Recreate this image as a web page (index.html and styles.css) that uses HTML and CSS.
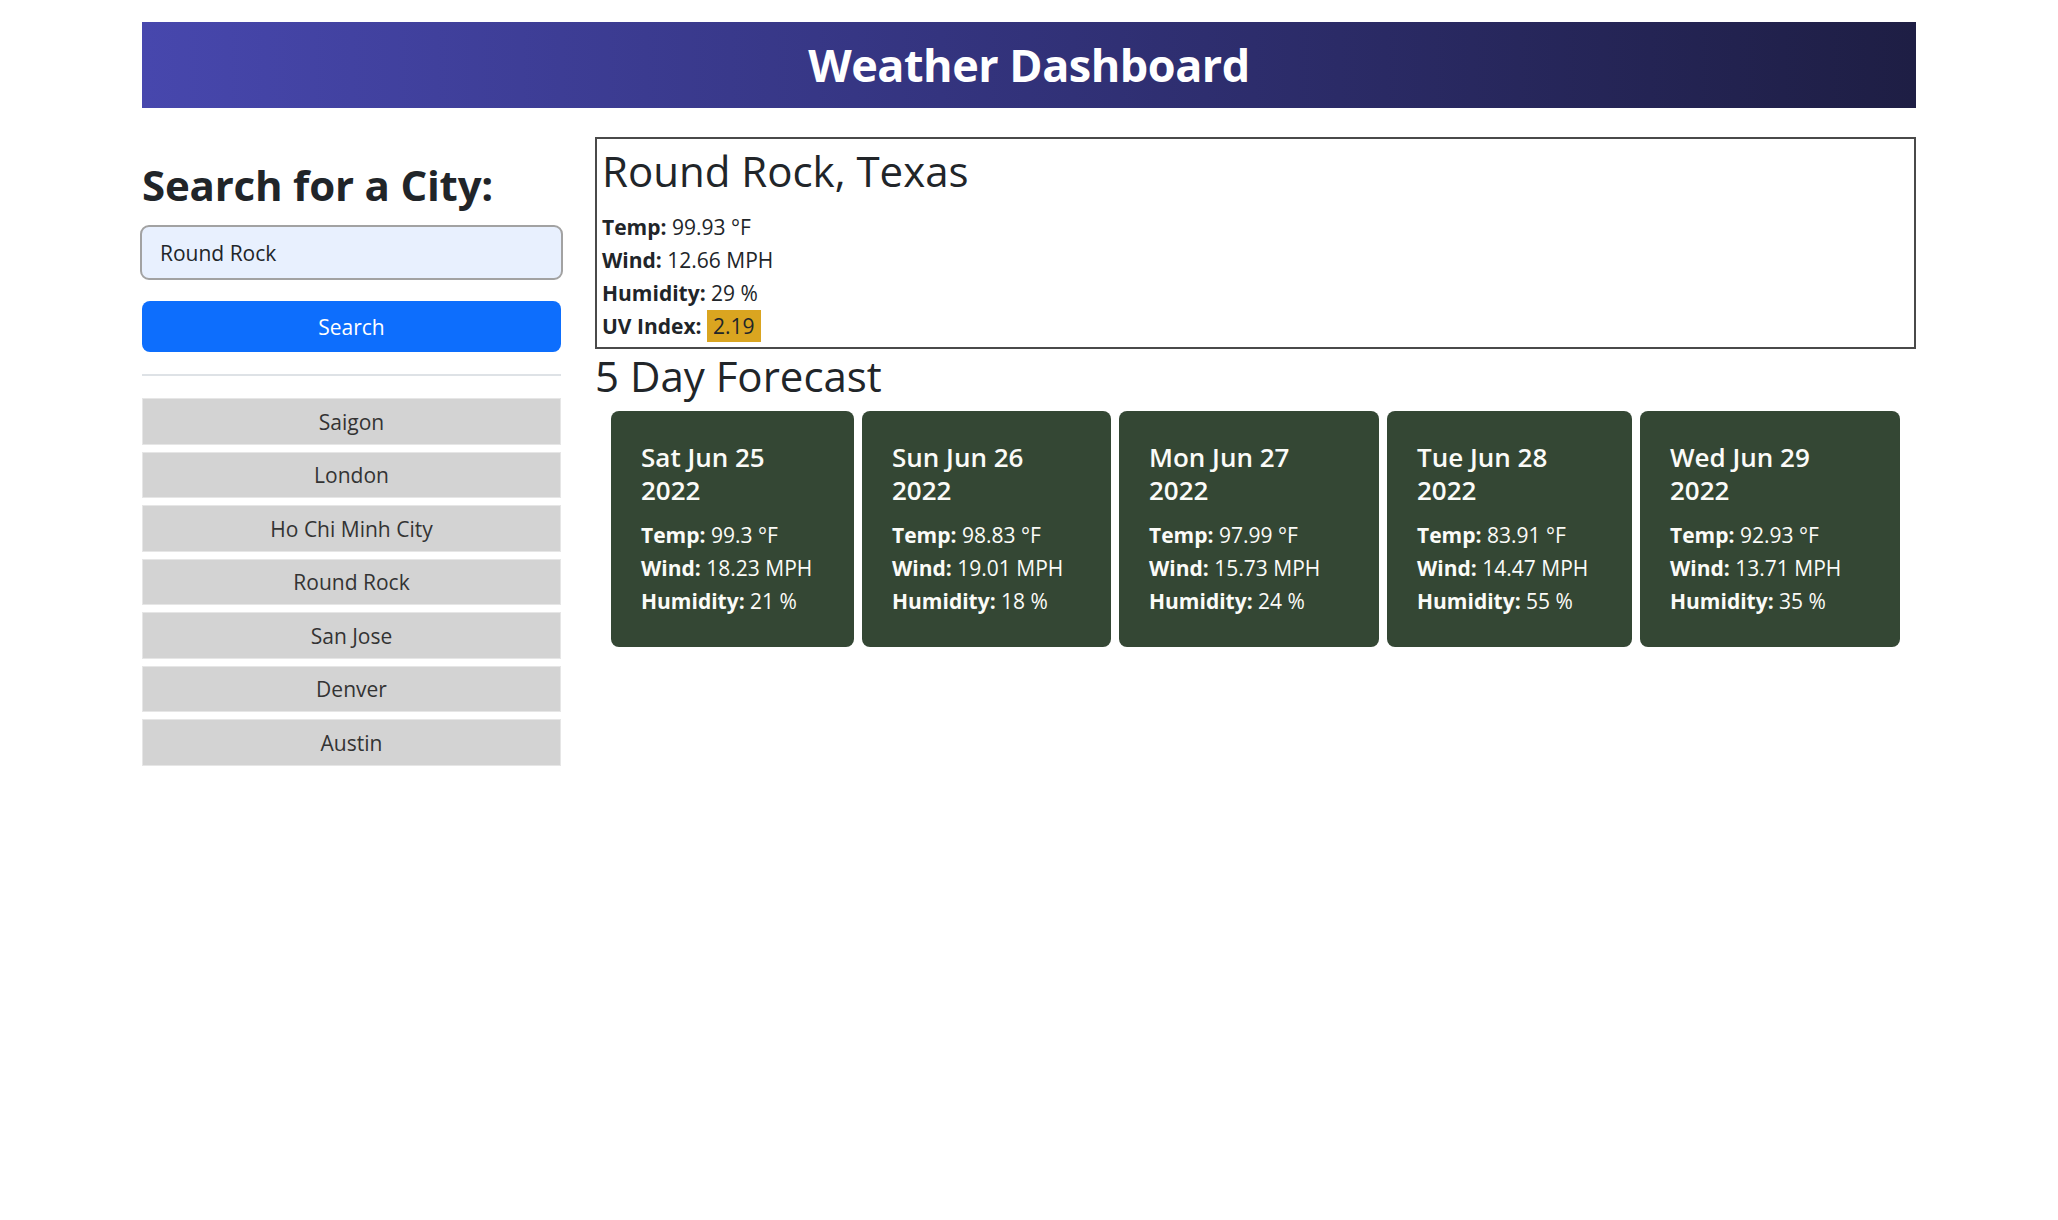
FILE: index.html
```html
<!DOCTYPE html>
<html lang="en">
<head>
<meta charset="utf-8">
<title>Weather Dashboard</title>
<link rel="stylesheet" href="styles.css">
</head>
<body>
<div class="page">
  <header class="banner">
    <h1 class="banner-title">Weather Dashboard</h1>
  </header>
  <main class="main">
    <aside class="sidebar">
      <h2 class="search-title">Search for a City:</h2>
      <input class="search-input" type="text" value="Round Rock">
      <button class="search-btn">Search</button>
      <hr class="divider">
      <div class="history">
        <button class="city-btn">Saigon</button>
        <button class="city-btn">London</button>
        <button class="city-btn">Ho Chi Minh City</button>
        <button class="city-btn">Round Rock</button>
        <button class="city-btn">San Jose</button>
        <button class="city-btn">Denver</button>
        <button class="city-btn">Austin</button>
      </div>
    </aside>
    <section class="content">
      <div class="current">
        <h2 class="current-title">Round Rock, Texas</h2>
        <p class="stat"><b>Temp:</b> 99.93 °F</p>
        <p class="stat"><b>Wind:</b> 12.66 MPH</p>
        <p class="stat"><b>Humidity:</b> 29 %</p>
        <p class="stat"><b>UV Index:</b> <span class="uv">2.19</span></p>
      </div>
      <h2 class="forecast-title">5 Day Forecast</h2>
      <div class="cards">
        <div class="card">
          <h5 class="card-date">Sat Jun 25<br>2022</h5>
          <p class="stat"><b>Temp:</b> 99.3 °F</p>
          <p class="stat"><b>Wind:</b> 18.23 MPH</p>
          <p class="stat"><b>Humidity:</b> 21 %</p>
        </div>
        <div class="card">
          <h5 class="card-date">Sun Jun 26<br>2022</h5>
          <p class="stat"><b>Temp:</b> 98.83 °F</p>
          <p class="stat"><b>Wind:</b> 19.01 MPH</p>
          <p class="stat"><b>Humidity:</b> 18 %</p>
        </div>
        <div class="card">
          <h5 class="card-date">Mon Jun 27<br>2022</h5>
          <p class="stat"><b>Temp:</b> 97.99 °F</p>
          <p class="stat"><b>Wind:</b> 15.73 MPH</p>
          <p class="stat"><b>Humidity:</b> 24 %</p>
        </div>
        <div class="card">
          <h5 class="card-date">Tue Jun 28<br>2022</h5>
          <p class="stat"><b>Temp:</b> 83.91 °F</p>
          <p class="stat"><b>Wind:</b> 14.47 MPH</p>
          <p class="stat"><b>Humidity:</b> 55 %</p>
        </div>
        <div class="card">
          <h5 class="card-date">Wed Jun 29<br>2022</h5>
          <p class="stat"><b>Temp:</b> 92.93 °F</p>
          <p class="stat"><b>Wind:</b> 13.71 MPH</p>
          <p class="stat"><b>Humidity:</b> 35 %</p>
        </div>
      </div>
    </section>
  </main>
</div>
</body>
</html>
```

FILE: styles.css
```css
* { box-sizing: border-box; }

body {
  margin: 0;
  background: #fff;
  color: #212529;
  font-family: "Open Sans", "Noto Sans", sans-serif;
  font-size: 21px;
  line-height: 33px;
}

.page {
  width: 1774px;
  margin: 0 auto;
  padding-top: 22px;
}

.banner {
  height: 86px;
  background: linear-gradient(90deg, #4747ad 0%, #34347f 45%, #1e1e44 100%);
  display: flex;
  align-items: center;
  justify-content: center;
}

.banner-title {
  margin: 0;
  color: #fff;
  font-size: 45px;
  font-weight: 700;
  line-height: 1.2;
  letter-spacing: -0.5px;
}

.main {
  display: flex;
  gap: 34px;
  margin-top: 29px;
}

.sidebar {
  width: 419px;
  flex: none;
  padding-top: 23px;
}

.search-title {
  margin: 0 0 15px;
  font-size: 42px;
  font-weight: 700;
  line-height: 1.2;
  letter-spacing: -0.2px;
}

.search-input {
  display: block;
  width: 423px;
  height: 55px;
  margin-left: -2px;
  padding: 0 18px;
  border: 2px solid #a2a2a2;
  border-radius: 9px;
  background: #e8f0fe;
  color: #212529;
  font-family: inherit;
  font-size: 21px;
}

.search-btn {
  display: block;
  width: 100%;
  height: 51px;
  margin-top: 21px;
  border: none;
  border-radius: 8px;
  background: #0d6efd;
  color: #fff;
  font-family: inherit;
  font-size: 21px;
}

.divider {
  margin: 22px 0 22px;
  border: 0;
  border-top: 2px solid #dee2e6;
}

.history {
  display: flex;
  flex-direction: column;
  gap: 7px;
}

.city-btn {
  height: 46.5px;
  border: 1px solid #e6e6e6;
  background: #d3d3d3;
  color: #333;
  font-family: inherit;
  font-size: 21px;
}

.content {
  flex: 1;
  min-width: 0;
}

.current {
  height: 212px;
  border: 2px solid #4a4a4a;
  padding: 6px 5px 0;
}

.current-title {
  margin: 0 0 13px;
  font-size: 42px;
  font-weight: 400;
  line-height: 1.25;
}

.stat {
  margin: 0;
}

.uv {
  display: inline-block;
  padding: 0 6px;
  background: #daa520;
  color: #212529;
  line-height: 32px;
}

.forecast-title {
  margin: -3px 0 5px;
  font-size: 42px;
  font-weight: 400;
  line-height: 60px;
}

.cards {
  display: flex;
  gap: 8px;
  padding: 0 16px;
}

.card {
  flex: 1 1 auto;
  height: 236px;
  padding: 30px 20px 0 30px;
  border-radius: 8px;
  background: #344734;
  color: #fbfbf8;
}

.card:nth-child(1) { flex: 0 1 243px; }
.card:nth-child(2) { flex: 0 1 249px; }
.card:nth-child(3) { flex: 0 1 260px; }
.card:nth-child(4) { flex: 0 1 245px; }
.card:nth-child(5) { flex: 0 1 260px; }

.card-date {
  margin: 0 0 12px;
  font-size: 26px;
  font-weight: 600;
  line-height: 33px;
}
```
